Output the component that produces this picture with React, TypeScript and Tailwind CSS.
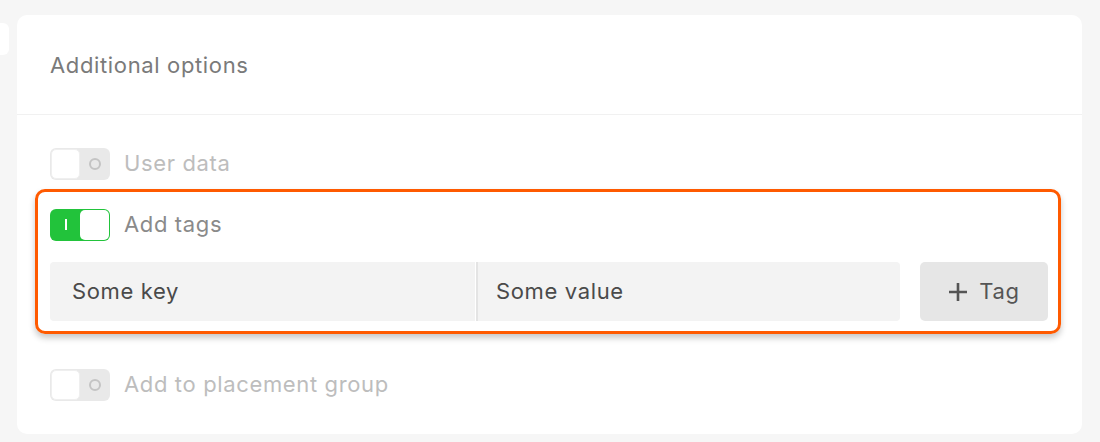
import React from 'react';

interface ToggleProps {
  on?: boolean;
}

const Toggle: React.FC<ToggleProps> = ({ on }) => {
  if (on) {
    return (
      <div className="w-[60px] h-[32px] rounded-[6px] bg-[#22c33b] flex items-center p-[1px] shrink-0">
        <div className="flex-1 flex justify-center">
          <div className="w-[2px] h-[11px] bg-white" />
        </div>
        <div className="w-[29px] h-[30px] rounded-[5px] bg-white" />
      </div>
    );
  }
  return (
    <div className="w-[60px] h-[32px] rounded-[6px] bg-[#e9e9e9] flex items-center p-[1px] shrink-0">
      <div className="w-[29px] h-[30px] rounded-[5px] bg-white border border-[#efefef]" />
      <div className="flex-1 flex justify-center">
        <div className="w-[12px] h-[12px] rounded-full border-2 border-[#c4c4c4]" />
      </div>
    </div>
  );
};

export default function App() {
  return (
    <div
      className="w-[1100px] h-[442px] bg-[#f6f6f6] flex gap-[8px] pt-[15px] overflow-hidden tracking-[0.04em]"
      style={{ fontFamily: 'Inter, "Noto Sans", sans-serif' }}
    >
      <div className="w-[9px] h-[32px] mt-[8px] bg-white rounded-r-[6px] shrink-0" />

      <div className="w-[1065px] h-[419px] bg-white rounded-[10px] flex flex-col shrink-0">
        <div className="h-[100px] pt-[1px] px-[33px] flex items-center border-b border-[#f1f1f1]">
          <h2 className="text-[22px] text-[#7a7a7a]">Additional options</h2>
        </div>

        <div className="pt-[32px] flex flex-col">
          <div className="px-[33px] flex items-center gap-[14px]">
            <Toggle />
            <span className="text-[22px] text-[#bdbdbd]">User data</span>
          </div>

          <div className="mt-[9px] ml-[18px] w-[1026px] border-[3px] border-[#ff5a00] rounded-[10px] shadow-[0_4px_6px_rgba(0,0,0,0.22)] pt-[16px] pb-[10px] pl-[12px] pr-[10px]">
            <div className="flex items-center gap-[14px]">
              <Toggle on />
              <span className="text-[22px] text-[#8a8a8a]">Add tags</span>
            </div>
            <div className="mt-[21px] flex items-center">
              <div className="w-[425px] h-[59px] bg-[#f3f3f3] rounded-l-[4px] flex items-center px-[22px] text-[22px] text-[#4a4a4a]">
                Some key
              </div>
              <div className="ml-[1px] w-[424px] h-[59px] bg-[#f3f3f3] border-l-2 border-[#e4e4e4] rounded-r-[4px] flex items-center px-[18px] text-[22px] text-[#4a4a4a]">
                Some value
              </div>
              <button className="ml-[20px] w-[128px] h-[59px] bg-[#e6e6e6] rounded-[5px] flex items-center justify-center gap-[11px] text-[22px] text-[#555555]">
                <svg width="20" height="20" viewBox="0 0 20 20" fill="none" stroke="#555555" strokeWidth="2.6">
                  <path d="M10 1v18M1 10h18" />
                </svg>
                Tag
              </button>
            </div>
          </div>

          <div className="mt-[34px] px-[33px] flex items-center gap-[14px]">
            <Toggle />
            <span className="text-[22px] text-[#bdbdbd]">Add to placement group</span>
          </div>
        </div>
      </div>
    </div>
  );
}
